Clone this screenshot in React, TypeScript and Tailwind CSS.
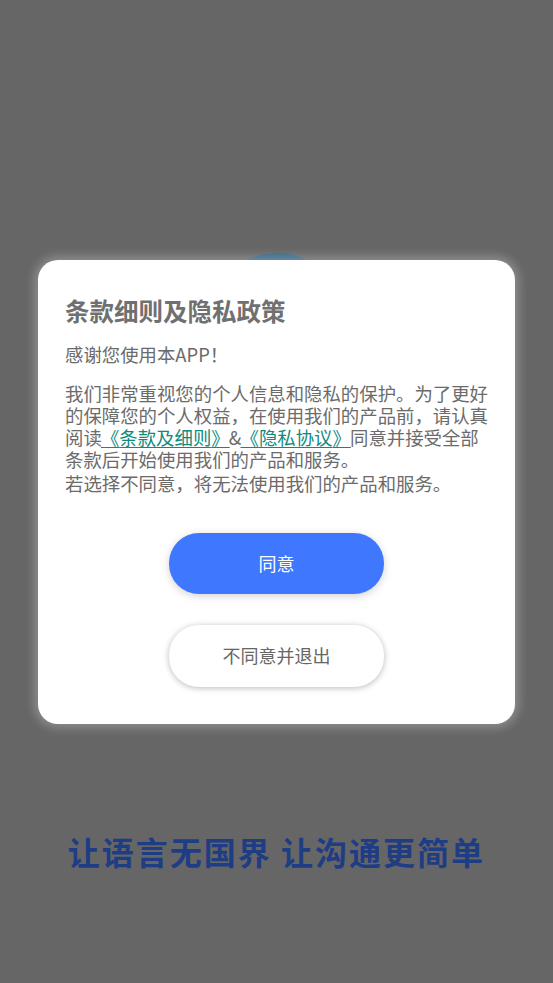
import React from "react";

const font = { fontFamily: '"Noto Sans CJK SC", "Noto Sans", sans-serif' };

export default function App() {
  return (
    <div className="relative h-[983px] w-full overflow-hidden bg-[#666666]" style={font}>
      {/* page behind the dialog, dimmed */}
      <div className="flex flex-col items-center">
        <div className="mt-[253px] h-[136px] w-[136px] rounded-full bg-[#396887]" />
        <div className="mt-[442px] text-[32px] font-bold leading-[40px] tracking-[2px] text-[#1e3d84]">
          让语言无国界 让沟通更简单
        </div>
      </div>

      {/* privacy dialog */}
      <div className="absolute inset-0 flex items-center justify-center">
        <div className="w-[477px] rounded-[20px] bg-white px-[27px] pt-[36px] pb-[37px] shadow-[0_0_10px_4px_rgba(255,255,255,0.25)]">
          <h2 className="text-[24.5px] font-bold leading-[30px] text-[#707070]">条款细则及隐私政策</h2>
          <p className="mt-[17px] text-[18.4px] leading-[22px] text-[#6b6b6b]">感谢您使用本APP！</p>
          <p className="mt-[17px] text-[18.4px] leading-[22px] text-[#6b6b6b]">
            我们非常重视您的个人信息和隐私的保护。为了更好的保障您的个人权益，在使用我们的产品前，请认真阅读
            <a className="text-[#0f8a7e] underline underline-offset-2">
              {" "}
              <span className="-ml-[5px]">《</span>条款及细则<span className="-mr-[5px]">》</span>{" "}
            </a>
            &amp;
            <a className="text-[#0f8a7e] underline underline-offset-2">
              {" "}
              <span className="-ml-[5px]">《</span>隐私协议<span className="-mr-[5px]">》</span>{" "}
            </a>
            同意并接受全部条款后开始使用我们的产品和服务。
          </p>
          <p className="mt-[2px] text-[18.4px] leading-[22px] text-[#6b6b6b]">若选择不同意，将无法使用我们的产品和服务。</p>

          <div className="mt-[39px] flex flex-col items-center gap-[31px]">
            <button className="h-[61px] w-[215px] rounded-[30px] bg-[#3f78fe] text-[18px] text-white shadow-[0_2px_8px_rgba(0,0,0,0.18)]">
              同意
            </button>
            <button className="h-[62px] w-[215px] rounded-[30px] bg-white text-[18px] text-[#666666] shadow-[0_1px_6px_rgba(0,0,0,0.28)]">
              不同意并退出
            </button>
          </div>
        </div>
      </div>
    </div>
  );
}
